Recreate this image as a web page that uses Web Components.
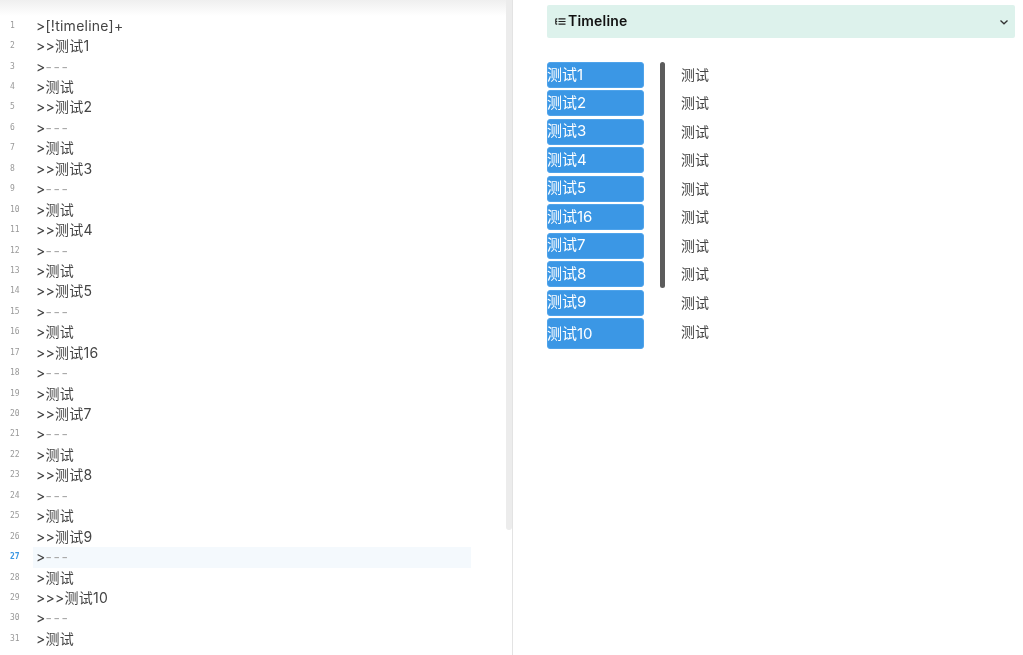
<!DOCTYPE html>
<html lang="zh">
<head>
<meta charset="utf-8">
<title>Timeline</title>
<style>
  html, body { margin: 0; height: 100%; overflow: hidden; background: #fff; }
  body {
    font-family: Inter, "Noto Sans CJK SC", sans-serif;
    color: #333;
  }
</style>
</head>
<body>
<split-view>
  <code-editor slot="left"></code-editor>
  <preview-pane slot="right">
    <timeline-callout title="Timeline"></timeline-callout>
  </preview-pane>
</split-view>

<script>
class SplitView extends HTMLElement {
  constructor() {
    super();
    this.attachShadow({ mode: 'open' });
    this.shadowRoot.innerHTML = `
      <style>
        :host { display: flex; width: 1023px; height: 655px; overflow: hidden; }
        .left { width: 512px; flex: none; position: relative; overflow: hidden; }
        .right { flex: 1; border-left: 1px solid #e3e3e3; min-width: 0; }
        .shade {
          position: absolute; left: 0; right: 0; top: 0; height: 16px;
          background: linear-gradient(#efefef, #fff);
        }
        .thumb {
          position: absolute; right: 0; top: 0; width: 6px; height: 530px;
          background: #ececec; border-radius: 0 0 3px 3px;
        }
      </style>
      <div class="left">
        <div class="shade"></div>
        <slot name="left"></slot>
        <div class="thumb"></div>
      </div>
      <div class="right"><slot name="right"></slot></div>
    `;
  }
}
customElements.define('split-view', SplitView);

class EditorLine extends HTMLElement {
  constructor() {
    super();
    this.attachShadow({ mode: 'open' });
    this.shadowRoot.innerHTML = `
      <style>
        :host { display: flex; height: 20.45px; line-height: 20.45px; font-size: 14px; color: #444; }
        .num {
          width: 33px; flex: none; padding-left: 10px; box-sizing: border-box;
          font: 8px/20.45px "DejaVu Sans Mono", monospace; color: #999;
        }
        .text { width: 438px; padding-left: 3px; box-sizing: border-box; letter-spacing: .25px; white-space: pre; }
        :host([active]) .num { color: #3b97e3; font-weight: bold; }
        :host([active]) .text { background: #f4f9fd; }
        ::slotted(span) { color: #aaa; letter-spacing: 1.5px; }
      </style>
      <div class="num"></div>
      <div class="text"><slot></slot></div>
    `;
  }

  connectedCallback() {
    this.shadowRoot.querySelector('.num').textContent = this.getAttribute('n');
  }
}
customElements.define('editor-line', EditorLine);

class CodeEditor extends HTMLElement {
  constructor() {
    super();
    this.attachShadow({ mode: 'open' });
    // will-change puts the text on its own transparent layer, grey antialiasing like the reference
    this.shadowRoot.innerHTML = `
      <style>
        :host { display: block; padding-top: 15.7px; will-change: transform; }
      </style>
      <slot></slot>
    `;
  }

  connectedCallback() {
    const titles = ['1', '2', '3', '4', '5', '16', '7', '8', '9', '10'];
    const lines = ['>[!timeline]+'];
    titles.forEach((t) => {
      lines.push((t === '10' ? '>>>' : '>>') + '测试' + t);
      lines.push('>---');
      lines.push('>测试');
    });
    lines.forEach((text, i) => {
      const line = document.createElement('editor-line');
      line.setAttribute('n', i + 1);
      if (i + 1 === 27) line.setAttribute('active', '');
      if (text === '>---') {
        const dash = document.createElement('span');
        dash.textContent = '---';
        line.append('>', dash);
      } else {
        line.textContent = text;
      }
      this.append(line);
    });
  }
}
customElements.define('code-editor', CodeEditor);

class PreviewPane extends HTMLElement {
  constructor() {
    super();
    this.attachShadow({ mode: 'open' });
    this.shadowRoot.innerHTML = `
      <style>
        :host { display: block; padding: 5px 8px 0 34px; will-change: transform; }
      </style>
      <slot></slot>
    `;
  }
}
customElements.define('preview-pane', PreviewPane);

class TimelineCallout extends HTMLElement {
  constructor() {
    super();
    this.attachShadow({ mode: 'open' });
    this.shadowRoot.innerHTML = `
      <style>
        :host { display: block; }
        .head {
          display: flex; align-items: center; height: 33px; padding: 0 6px 0 8px;
          background: #ddf2ec; border-radius: 2px;
          font-size: 14px; font-weight: 600; color: #111;
        }
        .head svg.list { margin-right: 2px; }
        .head span { flex: 1; letter-spacing: .2px; margin-bottom: 2px; }
        .body { display: flex; margin-top: 24px; }
        .labels, .texts { display: flex; flex-direction: column; }
        .labels { width: 97px; }
        .bar { width: 5px; height: 226px; margin: 0 16px; background: #5c5c5c; border-radius: 3px; }
        .texts { font-size: 14px; color: #444; }
      </style>
      <div class="head">
        <svg class="list" width="11" height="11" viewBox="0 0 11 11" fill="none" stroke="#222" stroke-width="1.2">
          <path d="M3.5 2.8H10.5M3.5 5.5H10.5M3.5 8.2H10.5"/>
          <path d="M2.2 2.8H1.6Q.8 2.8 .8 3.6V7.4Q.8 8.2 1.6 8.2H2.2M.8 5.5H2.2"/>
        </svg>
        <span></span>
        <svg width="10" height="10" viewBox="0 0 10 10" fill="none" stroke="#333" stroke-width="1.3">
          <path d="M1.5 3.5L5 6.8L8.5 3.5"/>
        </svg>
      </div>
      <div class="body">
        <div class="labels"></div>
        <div class="bar"></div>
        <div class="texts"></div>
      </div>
    `;
  }

  connectedCallback() {
    this.shadowRoot.querySelector('.head span').textContent = this.getAttribute('title');
    const titles = ['1', '2', '3', '4', '5', '16', '7', '8', '9', '10'];
    const labels = this.shadowRoot.querySelector('.labels');
    const texts = this.shadowRoot.querySelector('.texts');
    titles.forEach((t, i) => {
      const label = document.createElement('timeline-label');
      label.textContent = '测试' + t;
      if (i === titles.length - 1) label.setAttribute('tall', '');
      labels.append(label);
      const text = document.createElement('timeline-text');
      text.textContent = '测试';
      texts.append(text);
    });
  }
}
customElements.define('timeline-callout', TimelineCallout);

class TimelineLabel extends HTMLElement {
  constructor() {
    super();
    this.attachShadow({ mode: 'open' });
    this.shadowRoot.innerHTML = `
      <style>
        :host {
          display: flex; align-items: center; box-sizing: border-box;
          height: 26px; margin-bottom: 2.44px; padding-bottom: 2px;
          background: #3b97e5; border: 1px solid #4fa3ea; border-radius: 3px;
          color: #fff; font-size: 15px; line-height: 1;
        }
        :host([tall]) { height: 31px; margin: 0; padding-bottom: 0; }
        span { margin-left: -1px; }
      </style>
      <span><slot></slot></span>
    `;
  }
}
customElements.define('timeline-label', TimelineLabel);

class TimelineText extends HTMLElement {
  constructor() {
    super();
    this.attachShadow({ mode: 'open' });
    this.shadowRoot.innerHTML = `
      <style>
        :host { display: flex; align-items: center; box-sizing: border-box; height: 28.55px; padding-bottom: 5.4px; }
      </style>
      <slot></slot>
    `;
  }
}
customElements.define('timeline-text', TimelineText);
</script>
</body>
</html>
